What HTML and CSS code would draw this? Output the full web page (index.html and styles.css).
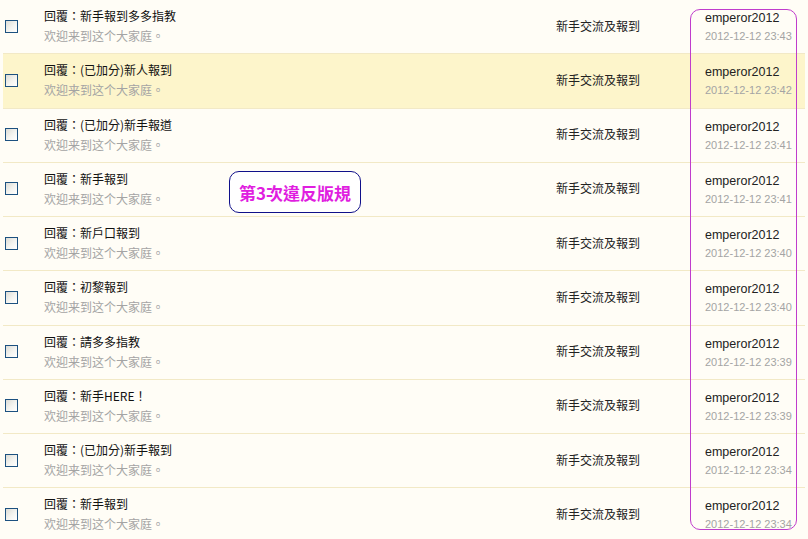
FILE: index.html
```html
<!DOCTYPE html>
<html lang="zh-Hant">
<head>
  <meta charset="UTF-8" />
  <title>回覆列表</title>
  <link rel="stylesheet" href="styles.css">
</head>
<body>
  <div class="page">
    <div class="list">
      <div class="row">
        <div class="check"><span class="box"></span></div>
        <div class="topic">
          <div class="title">回覆：新手報到多多指教</div>
          <div class="summary">欢迎来到这个大家庭。</div>
        </div>
        <div class="forum">新手交流及報到</div>
        <div class="author">
          <div class="name">emperor2012</div>
          <div class="date">2012-12-12 23:43</div>
        </div>
      </div>
      <div class="row hover">
        <div class="check"><span class="box"></span></div>
        <div class="topic">
          <div class="title">回覆：(已加分)新人報到</div>
          <div class="summary">欢迎来到这个大家庭。</div>
        </div>
        <div class="forum">新手交流及報到</div>
        <div class="author">
          <div class="name">emperor2012</div>
          <div class="date">2012-12-12 23:42</div>
        </div>
      </div>
      <div class="row">
        <div class="check"><span class="box"></span></div>
        <div class="topic">
          <div class="title">回覆：(已加分)新手報道</div>
          <div class="summary">欢迎来到这个大家庭。</div>
        </div>
        <div class="forum">新手交流及報到</div>
        <div class="author">
          <div class="name">emperor2012</div>
          <div class="date">2012-12-12 23:41</div>
        </div>
      </div>
      <div class="row">
        <div class="check"><span class="box"></span></div>
        <div class="topic">
          <div class="title">回覆：新手報到</div>
          <div class="summary">欢迎来到这个大家庭。</div>
        </div>
        <div class="forum">新手交流及報到</div>
        <div class="author">
          <div class="name">emperor2012</div>
          <div class="date">2012-12-12 23:41</div>
        </div>
      </div>
      <div class="row">
        <div class="check"><span class="box"></span></div>
        <div class="topic">
          <div class="title">回覆：新戶口報到</div>
          <div class="summary">欢迎来到这个大家庭。</div>
        </div>
        <div class="forum">新手交流及報到</div>
        <div class="author">
          <div class="name">emperor2012</div>
          <div class="date">2012-12-12 23:40</div>
        </div>
      </div>
      <div class="row">
        <div class="check"><span class="box"></span></div>
        <div class="topic">
          <div class="title">回覆：初黎報到</div>
          <div class="summary">欢迎来到这个大家庭。</div>
        </div>
        <div class="forum">新手交流及報到</div>
        <div class="author">
          <div class="name">emperor2012</div>
          <div class="date">2012-12-12 23:40</div>
        </div>
      </div>
      <div class="row">
        <div class="check"><span class="box"></span></div>
        <div class="topic">
          <div class="title">回覆：請多多指教</div>
          <div class="summary">欢迎来到这个大家庭。</div>
        </div>
        <div class="forum">新手交流及報到</div>
        <div class="author">
          <div class="name">emperor2012</div>
          <div class="date">2012-12-12 23:39</div>
        </div>
      </div>
      <div class="row">
        <div class="check"><span class="box"></span></div>
        <div class="topic">
          <div class="title">回覆：新手HERE！</div>
          <div class="summary">欢迎来到这个大家庭。</div>
        </div>
        <div class="forum">新手交流及報到</div>
        <div class="author">
          <div class="name">emperor2012</div>
          <div class="date">2012-12-12 23:39</div>
        </div>
      </div>
      <div class="row">
        <div class="check"><span class="box"></span></div>
        <div class="topic">
          <div class="title">回覆：(已加分)新手報到</div>
          <div class="summary">欢迎来到这个大家庭。</div>
        </div>
        <div class="forum">新手交流及報到</div>
        <div class="author">
          <div class="name">emperor2012</div>
          <div class="date">2012-12-12 23:34</div>
        </div>
      </div>
      <div class="row">
        <div class="check"><span class="box"></span></div>
        <div class="topic">
          <div class="title">回覆：新手報到</div>
          <div class="summary">欢迎来到这个大家庭。</div>
        </div>
        <div class="forum">新手交流及報到</div>
        <div class="author">
          <div class="name">emperor2012</div>
          <div class="date">2012-12-12 23:34</div>
        </div>
      </div>
    </div>

    <!-- annotations drawn over the screenshot -->
    <div class="mark-authors"></div>
    <div class="warning">第3次違反版規</div>
  </div>
</body>
</html>
```

FILE: styles.css
```css
body {
  margin: 0;
  background: #fffdf6;
  font-family: "Liberation Sans", "Noto Sans CJK TC", sans-serif;
  font-size: 12px;
  color: #222;
}
.page {
  position: relative;
  height: 539px;
  overflow: hidden;
}
.list {
  margin: 0 3px;
}
.row {
  display: grid;
  grid-template-columns: 41px 512px 149px 1fr;
  align-items: center;
  height: 54.25px;
  box-sizing: border-box;
  border-bottom: 1px solid #f2e9c6;
  background: #fffdf6;
}
.row.hover {
  background: #fdf5cb;
}
.check {
  padding-left: 2px;
  display: flex;
  align-items: center;
  height: 100%;
  padding-bottom: 1px;
  box-sizing: border-box;
}
.box {
  display: block;
  width: 11px;
  height: 11px;
  border: 1px solid #1c5180;
  background: linear-gradient(135deg, #dcdcd6 0%, #f4f4f0 55%, #ffffff 100%);
}
.topic {
  align-self: start;
  padding-top: 6px;
  font-family: "Noto Sans CJK TC", sans-serif;
  line-height: 20px;
}
.title {
  color: #111;
}
.summary {
  color: #a4a4a4;
}
.forum {
  font-family: "Noto Sans CJK TC", sans-serif;
  color: #222;
  padding-bottom: 3px;
}
.author {
  align-self: start;
  padding-top: 9px;
}
.name {
  line-height: 18px;
  color: #222;
  font-size: 12.5px;
}
.date {
  line-height: 18px;
  font-size: 11px;
  color: #a4a4a4;
}
.mark-authors {
  position: absolute;
  left: 690px;
  top: 9px;
  width: 105px;
  height: 519px;
  border: 1px solid #c03ccc;
  border-radius: 10px;
}
.warning {
  position: absolute;
  left: 229px;
  top: 171px;
  width: 130px;
  height: 40px;
  border: 1px solid #10108a;
  border-radius: 10px;
  background: #fff;
  display: flex;
  align-items: center;
  justify-content: center;
  font-family: "Noto Sans CJK TC", serif;
  font-weight: bold;
  font-size: 17px;
  color: #e01ee0;
}
```
